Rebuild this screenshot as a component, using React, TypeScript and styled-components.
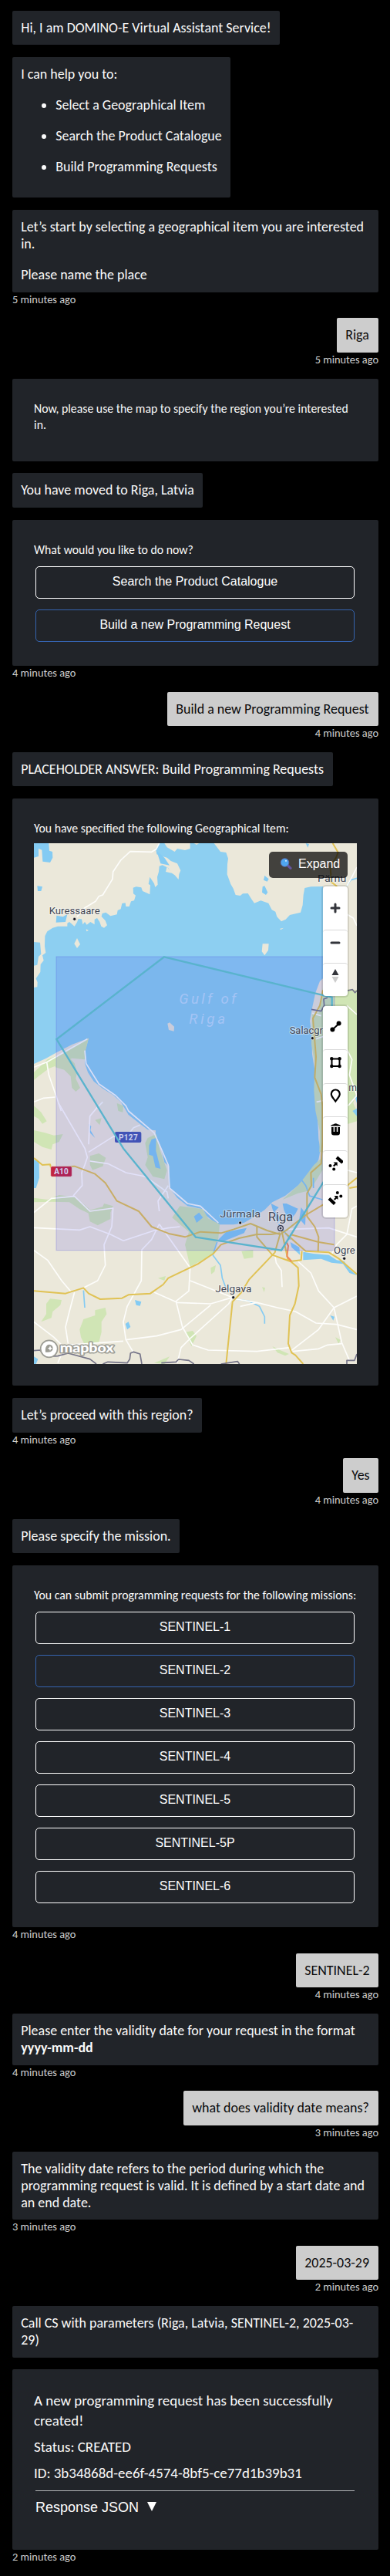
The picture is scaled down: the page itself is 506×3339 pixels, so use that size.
import React from "react";
import styled, { createGlobalStyle } from "styled-components";

const GlobalStyle = createGlobalStyle`
  * { box-sizing: border-box; }
  body { margin: 0; background: #000; }
`;

const Chat = styled.main`
  display: flex;
  flex-direction: column;
  width: 506px;
  height: 3339px;
  padding: 14px 15px 0 16px;
  background: #000;
  font-family: Carlito, Lato, sans-serif;
  font-size: 17.98px;
  line-height: 22px;
  overflow: hidden;
`;

const Message = styled.section<{ $user?: boolean; $gap?: number }>`
  display: flex;
  flex: none;
  flex-direction: column;
  align-items: ${(p) => (p.$user ? "flex-end" : "flex-start")};
  margin-bottom: ${(p) => p.$gap ?? 16}px;
`;

const Bubble = styled.div<{ $w: number; $h?: number; $user?: boolean }>`
  width: ${(p) => p.$w}px;
  height: ${(p) => p.$h ?? 44}px;
  padding: 11.2px;
  border-radius: 2px;
  background: ${(p) => (p.$user ? "#cdcdcd" : "#212429")};
  color: ${(p) => (p.$user ? "#0a0a0c" : "#fafafa")};
`;

const Line = styled.span`
  display: block;
  white-space: nowrap;
`;

const Paragraph = styled.p`
  margin: 0 0 18px;
`;

const List = styled.ul`
  margin: 0;
  padding-left: 45px;
  white-space: nowrap;
  li { margin-bottom: 18px; }
`;

const Time = styled.time`
  height: 17px;
  color: #cfcfcf;
  font-size: 14.4px;
  line-height: 19px;
  white-space: nowrap;
`;

const Card = styled.div<{ $h: number }>`
  display: flex;
  flex-direction: column;
  width: 475px;
  height: ${(p) => p.$h}px;
  padding: 28px;
  border-radius: 2px;
  background: #212429;
  color: #fafafa;
`;

const CardText = styled.div`
  font-size: 15.8px;
  line-height: 21px;
`;

const Options = styled.div`
  display: flex;
  flex-direction: column;
  gap: 14px;
  padding: 11px 3px 0 2px;
`;

const Option = styled.button<{ $active?: boolean }>`
  height: 42px;
  padding: 0 0 3px;
  border: 1px solid ${(p) => (p.$active ? "#3564b0" : "#fff")};
  border-radius: 5px;
  background: transparent;
  color: #fff;
  font: 16px "Liberation Sans", sans-serif;
`;

const ResultText = styled.p`
  margin: 0 0 8px;
  font-size: 18.95px;
  line-height: 26px;
  white-space: nowrap;
`;

const Rule = styled.hr`
  width: 414px;
  margin: 1px 0 0 2px;
  border: 0;
  border-top: 1px solid #b4b5b7;
`;

const Disclosure = styled.button`
  display: flex;
  align-items: flex-start;
  gap: 11px;
  margin-top: 11px;
  padding: 0 0 0 2px;
  border: 0;
  background: none;
  color: #fff;
  font: 18px/21px "Liberation Sans", sans-serif;
  svg { margin-top: 3px; }
`;

const MapFrame = styled.div`
  position: relative;
  flex: none;
  width: 419px;
  height: 675px;
  margin-top: 9px;
  overflow: hidden;
`;

const MapArt = styled.svg`
  display: block;
`;

const ExpandButton = styled.button`
  position: absolute;
  top: 11px;
  right: 12px;
  display: flex;
  align-items: center;
  gap: 8px;
  width: 102px;
  height: 34px;
  padding: 0 0 2px 14px;
  border: 0;
  border-radius: 5px;
  background: rgba(0, 0, 0, 0.72);
  color: #fff;
  font: 16px "Liberation Sans", sans-serif;
`;

const Tools = styled.div<{ $top: number }>`
  position: absolute;
  top: ${(p) => p.$top}px;
  right: 12px;
  width: 32px;
  border-radius: 4px;
  background: #fff;
  box-shadow: 0 0 0 2px rgba(0, 0, 0, 0.1);
`;

const Tool = styled.div<{ $h: number }>`
  display: flex;
  align-items: center;
  justify-content: center;
  height: ${(p) => p.$h}px;
  border-radius: 4px;
  & + & { border-top: 1px solid #d9d9d9; padding-bottom: 11px; }
`;

const ink = "#33353b";

const LAND_NW =
  "M132 39H620L606 60 610 82 625 88 650 95 665 108 690 118 703 145 697 160 695 180 680 163 664 152 655 135 632 124 620 128 618 150 612 170 614 200 604 210 600 196 583 170 578 198 585 202 583 238 570 232 555 225 550 211 530 208 518 212 519 235 528 242 522 262 510 265 503 285 490 285 488 271 475 273 470 295 458 300 455 316 430 322 412 308 398 312 395 324 410 340 417 358 405 368 394 362 388 345 378 330 368 335 368 355 352 345 338 356 330 345 322 355 318 334 305 333 300 346 290 362 270 345 262 350 262 362 225 362 205 368 184 382 175 400 174 440 178 465 165 475 170 495 158 510 157 540 140 565 146 580 145 598 132 600V515L145 512 150 480 160 470 156 425 132 423Z";
const LAND_MAIN =
  "M833 39H1389V2064H132V897L180 875 220 853 280 822 345 797 332 845 330 895 342 930 365 965 400 993 440 1018 470 1045 490 1078 500 1095 545 1130 575 1153 606 1156 605 1175 620 1205 632 1245 640 1280 659 1295 657 1340 663 1382 690 1418 730 1450 790 1462 800 1485 825 1505 850 1522 910 1522 950 1515 1000 1485 1030 1465 1060 1435 1110 1410 1160 1370 1190 1335 1220 1305 1240 1270 1247 1230 1240 1190 1236 1100 1230 1075 1224 1010 1225 920 1215 860 1213 780 1206 730 1215 680 1228 620 1245 575 1257 565V207L1210 208 1186 213 1181 240 1178 280 1170 308 1128 318 1112 335 1095 343 1078 325 1072 305 1058 298 1045 272 1015 262 990 272 980 258 965 234 945 235 935 243 917 240 908 215 898 198 884 160 885 120 888 98 880 75 858 72 845 55Z";

const GREENS = [
  "M132 930L185 880 240 857 345 797 332 850 330 880 280 875 230 900 190 915 150 945 132 960Z",
  "M215 885L270 873 290 895 300 930 295 955 312 990 295 1005 280 990 275 945 250 920 215 910Z",
  "M132 1060L160 1085 182 1120 165 1130 150 1110 132 1100ZM132 1155L175 1165 210 1175 245 1170 230 1200 205 1210 200 1230 165 1220 132 1200Z",
  "M370 1115L395 1108 388 1135ZM455 1050L480 1060 478 1085 460 1080Z",
  "M350 1255L385 1245 412 1262 400 1295 360 1310 350 1290ZM342 1468L400 1452 405 1440 440 1450 430 1475 430 1500 380 1525 350 1510Z",
  "M132 1418L185 1425 230 1407 295 1415 330 1445 348 1462 345 1478 310 1462 270 1435 200 1433 132 1435Z",
  "M565 1205L575 1185 608 1170 622 1230 650 1310 640 1345 595 1335 565 1290 575 1260Z",
  "M700 1450L790 1462 810 1498 855 1520 850 1575 825 1640 740 1685 720 1600 735 1550 670 1495Z",
  "M820 1690L840 1680 835 1705 822 1715ZM615 1730L645 1722 640 1740Z",
  "M180 1830L195 1810 240 1815 235 1835 205 1860 200 1885 160 1900 180 1870Z",
  "M325 1890L370 1875 370 1855 410 1845 415 1870 395 1900 395 1940 385 1980 330 1990 315 1960 310 1930Z",
  "M722 1940L750 1935 765 1955 745 1995ZM600 2060L660 2035 640 2064Z",
  "M1060 1995L1090 2010 1125 2025 1110 2032 1080 2020ZM1020 1765L1032 1768 1028 1785Z",
  "M1305 1960L1325 1970 1318 1985ZM940 1625L985 1620 985 1650 950 1655Z",
  "M1257 600L1389 610V1000L1375 1050 1389 1080V1120L1355 1130 1257 1100 1257 1240 1243 1240 1245 1160 1228 1080 1222 1000 1226 900 1212 820 1215 700 1240 700Z",
  "M1222 1290L1255 1260V1310L1225 1360 1205 1390 1160 1400 1100 1425 1165 1365Z",
];

const LAKES = [
  "M132 95L150 90 150 60 163 65 166 110 195 114 205 95 204 72 192 68 190 39H132Z",
  "M145 205L165 208 160 225 147 225ZM220 320L245 325 262 315 255 345 218 347ZM610 70L640 95 660 125 625 118Z",
  "M1030 165L1046 178 1040 188 1026 182ZM1022 208L1030 205 1042 230 1035 240 1020 230ZM1190 39L1203 42 1198 56Z",
  "M132 1270L152 1275 153 1340 140 1380 132 1380ZM345 1130L355 1140 352 1155 370 1185 350 1165Z",
  "M580 1215L590 1190 608 1185 607 1235 625 1305 605 1300 595 1255 580 1250Z",
  "M755 1490L775 1475 790 1495 765 1515ZM850 1580L880 1550 960 1535 950 1555 900 1575 860 1590Z",
  "M1100 1440L1115 1440 1160 1460 1150 1480 1125 1510 1105 1465ZM1055 1440L1085 1455 1070 1470 1095 1500 1080 1515 1060 1460Z",
  "M1172 1455L1190 1480 1188 1525 1165 1500ZM1130 1590L1165 1610 1168 1640 1135 1610Z",
  "M1180 1628L1220 1635 1280 1640 1310 1660 1340 1665 1360 1695 1389 1720 1360 1710 1335 1675 1290 1670 1250 1655 1180 1660Z",
  "M525 1815L550 1822 545 1838 530 1835ZM488 1908L500 1900 508 1920 495 1930ZM1285 1875L1302 1880 1297 1895Z",
  "M1372 1080L1389 1070V1100ZM1380 1020L1389 1025V1050ZM132 2035L148 2045 140 2064H132Z",
];

const WHITE_ROADS = [
  "M620 39L608 62 590 73 507 71 470 105 440 150 438 178 400 240 385 245 372 265 330 290 300 325",
  "M132 910L182 890 340 800M182 890L190 940 218 1020 238 1080M132 1045L170 1030 215 1026",
  "M228 1050L330 1225 340 1260 330 1290 318 1320 320 1370 285 1410M345 1210L350 1100 375 1070 400 1045",
  "M345 1240L440 1180 500 1170 520 1145 545 1135M350 1275L420 1285 490 1320 565 1335 650 1395 655 1420",
  "M132 1534L310 1543 350 1530 430 1560 480 1585 600 1545 655 1535 700 1530",
  "M132 1475L200 1420 290 1412 350 1470 440 1458 435 1530 405 1600 410 1680 380 1740 325 1768",
  "M132 1622L185 1660 240 1740 278 1785M290 1785L270 1860 255 1920 265 1985",
  "M620 1520L590 1580 552 1620 550 1740 495 1840 480 1900 490 1970 520 2020",
  "M330 845L335 895 385 975 450 1020 490 1060 500 1080 600 1165 620 1210 655 1290 660 1380 730 1440 780 1450 850 1515",
  "M620 1470L615 1430 655 1370M620 1520L740 1690 735 1780 685 1820 710 1920 750 1990 810 2010 1000 2015 1130 2000",
  "M600 1785L690 1825 820 1830 905 1805 740 1740M905 1805L890 1830 740 1965 705 2000 690 2060",
  "M490 1970L610 1955 705 1930 820 1835M265 1990L480 1975M132 1900L210 1960 250 2000 225 2060",
  "M910 1810L1000 1825 1080 1845 1150 1860 1230 1905 1310 1910 1389 1930M1000 1825L935 1840",
  "M1160 1665L1210 1710 1240 1780 1300 1845 1330 1980 1360 2050M1389 1800L1300 1845 1240 1930 1130 2015",
  "M1140 2015L1240 2005 1275 1990 1330 1985M1070 1640L1075 1670 1095 1700 1098 1765",
  "M1215 700L1250 710M1230 800L1260 790M1232 1045L1257 1040M1389 132L1370 170 1350 205M1350 315L1375 330 1389 360",
  "M1350 670L1389 705M1350 840L1370 880 1360 940 1389 1020 1355 1060M1350 1310L1389 1320M1120 1540L1280 1535 1389 1570",
  "M1290 1640L1310 1600 1350 1560 1370 1460 1389 1450",
];

const YELLOW_ROADS = [
  "M1295 39L1316 75 1308 95 1285 130 1288 160 1283 185 1312 207",
  "M1257 610L1245 670 1218 720 1230 870 1225 950 1250 1015 1255 1060 1255 1200 1250 1285 1210 1320 1212 1370 1195 1400 1195 1490 1225 1530 1240 1570 1238 1628",
  "M132 1263L165 1290 195 1288 198 1300 290 1295 370 1325 410 1360 455 1430 540 1470 590 1530 660 1558 720 1570 780 1550 860 1555 910 1540 975 1518 1040 1545 1090 1560 1120 1540 1190 1485 1257 1445 1389 1340",
  "M132 1780L255 1790 325 1768 345 1790 390 1812 475 1808 500 1795 585 1790 635 1755 655 1730 770 1675 830 1635 860 1600 930 1575 1000 1560 1055 1560 1090 1555",
  "M1000 1530L1000 1570 1060 1640 1130 1665 1172 1660 1175 1625M1090 1560L1070 1630 970 1735 940 1785 905 1822 880 2064",
  "M1095 1540L1120 1655 1160 1690 1163 1760 1148 1830 1128 1875 1122 1985 1135 2020 1150 2030 1180 2064",
  "M1110 1555L1190 1625 1280 1630 1320 1655 1389 1715M1130 1560L1240 1590 1300 1600M1360 1380L1389 1375",
];

type Label = { t: string; x: number; y: number; w: number; s: number; d?: [number, number] };
const LABELS: Label[] = [
  { t: "Kuressaare", x: 191, y: 315, w: 198, s: 38, d: [290, 334] },
  { t: "Pärnu", x: 1236, y: 189, w: 112, s: 38 },
  { t: "Salacgr", x: 1127, y: 779, w: 130, s: 38, d: [1216, 797] },
  { t: "Jūrmala", x: 856, y: 1495, w: 158, s: 39, d: [935, 1515] },
  { t: "Riga", x: 1043, y: 1508, w: 98, s: 51 },
  { t: "Jelgava", x: 838, y: 1785, w: 141, s: 40, d: [908, 1805] },
  { t: "Ogre", x: 1299, y: 1636, w: 83, s: 38, d: [1340, 1654] },
  { t: "m", x: 1357, y: 1001, w: 32, s: 38 },
];

function RegionMap() {
  return (
    <MapArt width="419" height="675" viewBox="132 39 1257 2025" preserveAspectRatio="none">
      <rect x="132" y="39" width="1257" height="2025" fill="#8dcff1" />
      <g fill="#ebe8da">
        <path d={LAND_NW} />
        <path d={LAND_MAIN} />
        <path d="M640 39H740V60L720 66 690 60 680 72 650 55ZM755 39H775L765 45ZM650 130L668 155 645 150Z" />
        <path d="M1022 430H1046L1044 455 1030 475 1019 460ZM300 408L312 432 300 447 289 430ZM652 740L660 736 678 752 677 770 657 765ZM1088 372L1104 368 1094 375ZM335 373L345 378 337 382Z" />
      </g>
      <g fill="#d0e5b5">
        {GREENS.map((d) => <path key={d} d={d} />)}
      </g>
      <g fill="#84cbf3">
        {LAKES.map((d) => <path key={d} d={d} />)}
      </g>
      <g fill="none" stroke="#84cbf3" strokeWidth="5">
        <path d="M845 1590L828 1640 858 1680 865 1730 878 1765M920 1812L970 1820 1010 1840 1030 1880V1907M325 1778L330 1845" />
        <path d="M1175 1350L1190 1370 1205 1410 1255 1425M1220 1340V1380M1389 175L1365 182 1350 205M1085 1520L1130 1580" />
      </g>
      <g fill="none" stroke="#fdfdfb" strokeWidth="5" strokeLinejoin="round">
        {WHITE_ROADS.map((d) => <path key={d} d={d} />)}
      </g>
      <g fill="none" stroke="#e0c254" strokeWidth="6" strokeLinejoin="round">
        {YELLOW_ROADS.map((d) => <path key={d} d={d} />)}
      </g>
      <path d="M1115 1590L1122 1605 1117 1645 1135 1665" fill="none" stroke="#f08a5b" strokeWidth="6" />
      <g fill="none" stroke="#767589" strokeWidth="5" strokeLinejoin="round">
        <path d="M1212 685L1250 692 1262 670 1260 645 1275 640M1353 612L1372 608 1382 620 1389 612" />
        <path d="M132 2012L155 2010 180 2035 225 2033 265 2022 350 2045 375 2064M400 2064L420 2056 495 2060 505 2045 508 2022 520 2017 545 2025 552 2064" />
        <path d="M628 2060L685 2056 695 2046 735 2050 755 2064M860 2064L925 2054 932 2064M1350 2064V2050L1380 2050 1389 2025" />
      </g>

      <rect x="197" y="1295" width="83" height="41" rx="6" fill="#c22440" stroke="#ebe8da" strokeWidth="2" />
      <rect x="447" y="1161" width="103" height="42" rx="6" fill="#4757b0" />
      <g fontFamily="Roboto, sans-serif" fontWeight="700" fontSize="30" fill="#ebebf2">
        <text x="211" y="1326" textLength="55">A10</text>
        <text x="462" y="1193" textLength="74">P127</text>
      </g>

      <rect x="219" y="480" width="1083" height="1142" fill="rgba(36,28,235,.12)" stroke="rgba(80,80,220,.28)" strokeWidth="3" />
      <path d="M639 481L1265 632 1292 638V1303L1095 1622 762 1571 480 1226 220 801Z" fill="rgba(60,180,190,.05)" stroke="#59b3cd" strokeWidth="7" />

      <g fontFamily="Roboto, sans-serif" fontStyle="italic" fontSize="56" fill="#a4c4f5">
        <text x="697" y="662" textLength="222">Gulf of</text>
        <text x="736" y="742" textLength="140">Riga</text>
      </g>
      {LABELS.map((l) => (
        <g key={l.t}>
          <text
            x={l.x} y={l.y} textLength={l.w} lengthAdjust="spacingAndGlyphs"
            fontFamily="Roboto, sans-serif" fontSize={l.s} fill="#454957"
            stroke="rgba(255,255,255,.45)" strokeWidth="6" strokeLinejoin="round" paintOrder="stroke"
          >
            {l.t}
          </text>
          {l.d && <circle cx={l.d[0]} cy={l.d[1]} r="6" fill="#14151c" stroke="rgba(255,255,255,.6)" strokeWidth="3" />}
        </g>
      ))}
      <circle cx="1092" cy="1536" r="10" fill="#dfe0ee" stroke="#33354a" strokeWidth="4" />
      <circle cx="1092" cy="1536" r="4.5" fill="#33354a" />

      <g stroke="#9c9c94" strokeWidth="5">
        <circle cx="191" cy="2005" r="33" fill="#fff" />
        <text
          x="233" y="2018" fontFamily="Lato, sans-serif" fontWeight="900" fontSize="50" fill="#fff"
          textLength="210" lengthAdjust="spacingAndGlyphs" strokeWidth="9" strokeLinejoin="round" paintOrder="stroke"
        >
          mapbox
        </text>
      </g>
      <path d="M177 2018C175 2000 180 1989 192 1988A15 15 0 0 1 206 2004C205 2017 190 2020 177 2018Z" fill="#9c9c94" />
      <path d="M195 1993L198 2000 205 2003 198 2006 195 2013 192 2006 185 2003 192 2000Z" fill="#fff" />
    </MapArt>
  );
}

const Glyph = ({ children }: { children: React.ReactNode }) => (
  <svg width="20" height="20" viewBox="0 0 20 20">{children}</svg>
);

function MapPanel() {
  return (
    <MapFrame>
      <RegionMap />
      <ExpandButton>
        <svg width="16" height="16" viewBox="0 0 16 16">
          <path d="M10 9.5L14 13.3" stroke="#6556a0" strokeWidth="3.2" strokeLinecap="round" />
          <circle cx="6.5" cy="6" r="5.3" fill="#4fa6f0" stroke="#5b6aae" strokeWidth=".9" />
          <circle cx="8" cy="3.8" r="1.1" fill="#cfe8ff" />
        </svg>
        Expand
      </ExpandButton>
      <Tools $top={56}>
        <Tool $h={56}><Glyph><path d="M10 5V15M5 10H15" stroke={ink} strokeWidth="3" strokeLinecap="round" /></Glyph></Tool>
        <Tool $h={43}><Glyph><path d="M5 10H15" stroke={ink} strokeWidth="3" strokeLinecap="round" /></Glyph></Tool>
        <Tool $h={43}>
          <Glyph>
            <path d="M10 1L14.5 9H5.5Z" fill={ink} />
            <path d="M10 19L14.5 11H5.5Z" fill="#ccc" />
          </Glyph>
        </Tool>
      </Tools>
      <Tools $top={211}>
        <Tool $h={56}>
          <Glyph>
            <path d="M6.5 12.5L14.5 5" stroke="#000" strokeWidth="2" />
            <circle cx="6.4" cy="12.6" r="3" /><circle cx="14.6" cy="4.6" r="3" />
          </Glyph>
        </Tool>
        <Tool $h={44}>
          <Glyph>
            <path d="M5.5 5.5H15.5V15H5.5Z" fill="none" stroke="#000" strokeWidth="2" />
            {[5.3, 15.6].map((x) => [5.3, 15].map((y) => <circle key={`${x}${y}`} cx={x} cy={y} r="2.2" />))}
          </Glyph>
        </Tool>
        <Tool $h={43}>
          <Glyph><path d="M10.3 16.5C8 13 4.8 10.5 4.8 7A5.5 5.5 0 0 1 15.8 7C15.8 10.5 12.6 13 10.3 16.5Z" fill="none" stroke="#000" strokeWidth="2.2" /></Glyph>
        </Tool>
        <Tool $h={44}>
          <Glyph>
            <path d="M4 5.5Q4 4.2 6 3.8L8 3.2Q10.5 1.5 13 3.2L15 3.8Q17 4.2 17 5.5Z" />
            <path d="M5 7H7.7V13H9.2V7H11.8V13H13.3V7H16V14.5Q16 17.5 13 17.5H8Q5 17.5 5 14.5Z" />
          </Glyph>
        </Tool>
        <Tool $h={44}>
          <Glyph>
            <path d="M13.5 3.5L18 7.5" stroke="#000" strokeWidth="4.2" strokeLinecap="square" />
            <circle cx="3.5" cy="13" r="2" /><circle cx="8.2" cy="17.5" r="2" />
            <path d="M7.5 8.5H12.7V13.5L11 12 8.5 14.2 7 12.8 9.5 10.3Z" />
          </Glyph>
        </Tool>
        <Tool $h={43}>
          <Glyph>
            <path d="M3.5 13L7.8 17" stroke="#000" strokeWidth="4.2" strokeLinecap="square" />
            <circle cx="12.8" cy="4" r="2" /><circle cx="17.3" cy="8.5" r="2" />
            <path d="M8.5 8H13.5V13L11.8 11.5 9.5 13.7 8 12.3 10.3 10Z" />
          </Glyph>
        </Tool>
      </Tools>
    </MapFrame>
  );
}

const missions = ["1", "2", "3", "4", "5", "5P", "6"];

const Bot = ({ w, h, time, gap, lines }: { w: number; h?: number; time?: string; gap?: number; lines: string[] }) => (
  <Message $gap={gap}>
    <Bubble $w={w} $h={h}>{lines.map((l) => <Line key={l}>{l}</Line>)}</Bubble>
    {time && <Time>{time}</Time>}
  </Message>
);

const User = ({ w, h, time, gap, text }: { w: number; h?: number; time: string; gap?: number; text: string }) => (
  <Message $user $gap={gap}>
    <Bubble $user $w={w} $h={h}><Line>{text}</Line></Bubble>
    <Time>{time}</Time>
  </Message>
);

export default function App() {
  return (
    <Chat>
      <GlobalStyle />
      <Bot w={347} lines={["Hi, I am DOMINO-E Virtual Assistant Service!"]} />
      <Message>
        <Bubble $w={283} $h={182}>
          <Paragraph>I can help you to:</Paragraph>
          <List>
            <li>Select a Geographical Item</li>
            <li>Search the Product Catalogue</li>
            <li>Build Programming Requests</li>
          </List>
        </Bubble>
      </Message>
      <Message>
        <Bubble $w={475} $h={107}>
          <Paragraph>
            <Line>Let’s start by selecting a geographical item you are interested</Line>
            <Line>in.</Line>
          </Paragraph>
          <Line>Please name the place</Line>
        </Bubble>
        <Time>5 minutes ago</Time>
      </Message>
      <User w={54} h={45} gap={17} text="Riga" time="5 minutes ago" />
      <Message $gap={15}>
        <Card $h={107}>
          <CardText>
            <Line>Now, please use the map to specify the region you’re interested</Line>
            <Line>in.</Line>
          </CardText>
        </Card>
      </Message>
      <Bot w={247} h={45} lines={["You have moved to Riga, Latvia"]} />
      <Message $gap={17}>
        <Card $h={189}>
          <CardText>What would you like to do now?</CardText>
          <Options>
            <Option>Search the Product Catalogue</Option>
            <Option $active>Build a new Programming Request</Option>
          </Options>
        </Card>
        <Time>4 minutes ago</Time>
      </Message>
      <User w={274} gap={17} text="Build a new Programming Request" time="4 minutes ago" />
      <Bot w={416} lines={["PLACEHOLDER ANSWER: Build Programming Requests"]} />
      <Message>
        <Card $h={761}>
          <CardText>You have specified the following Geographical Item:</CardText>
          <MapPanel />
        </Card>
      </Message>
      <Bot w={246} h={45} lines={["Let’s proceed with this region?"]} time="4 minutes ago" />
      <User w={46} h={45} gap={17} text="Yes" time="4 minutes ago" />
      <Bot w={217} lines={["Please specify the mission."]} />
      <Message $gap={17}>
        <Card $h={469}>
          <CardText>
            <Line>You can submit programming requests for the following missions:</Line>
          </CardText>
          <Options>
            {missions.map((m) => <Option key={m} $active={m === "2"}>SENTINEL-{m}</Option>)}
          </Options>
        </Card>
        <Time>4 minutes ago</Time>
      </Message>
      <User w={107} gap={17} text="SENTINEL-2" time="4 minutes ago" />
      <Message>
        <Bubble $w={475} $h={67}>
          <Line>Please enter the validity date for your request in the format</Line>
          <Line><b>yyyy-mm-dd</b></Line>
        </Bubble>
        <Time>4 minutes ago</Time>
      </Message>
      <User w={253} h={45} gap={17} text="what does validity date means?" time="3 minutes ago" />
      <Bot
        w={475} h={88} gap={17} time="3 minutes ago"
        lines={["The validity date refers to the period during which the", "programming request is valid. It is defined by a start date and", "an end date."]}
      />
      <User w={107} gap={17} text="2025-03-29" time="2 minutes ago" />
      <Bot w={475} h={67} gap={15} lines={["Call CS with parameters (Riga, Latvia, SENTINEL-2, 2025-03-", "29)"]} />
      <Message>
        <Card $h={234}>
          <ResultText>
            <Line>A new programming request has been successfully</Line>
            <Line>created!</Line>
          </ResultText>
          <ResultText>Status: CREATED</ResultText>
          <ResultText>ID: 3b34868d-ee6f-4574-8bf5-ce77d1b39b31</ResultText>
          <Rule />
          <Disclosure>
            Response JSON
            <svg width="12" height="12" viewBox="0 0 12 12"><path d="M0 0H12L6 12Z" fill="#fff" /></svg>
          </Disclosure>
        </Card>
        <Time>2 minutes ago</Time>
      </Message>
    </Chat>
  );
}
